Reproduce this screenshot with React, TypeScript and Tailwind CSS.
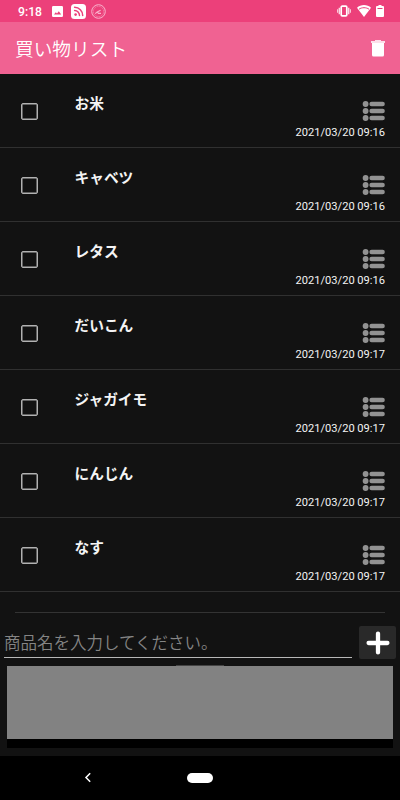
import React from "react";

const items = [
  { name: "お米", date: "2021/03/20 09:16" },
  { name: "キャベツ", date: "2021/03/20 09:16" },
  { name: "レタス", date: "2021/03/20 09:16" },
  { name: "だいこん", date: "2021/03/20 09:17" },
  { name: "ジャガイモ", date: "2021/03/20 09:17" },
  { name: "にんじん", date: "2021/03/20 09:17" },
  { name: "なす", date: "2021/03/20 09:17" },
];

function StatusBar() {
  return (
    <div className="flex h-[22px] items-center bg-[#ec407a] pl-[18px] pr-[16px] text-white">
      <span className="w-[34px] pt-[2px] font-[Roboto,sans-serif] text-[12.2px] font-medium leading-[20px]">9:18</span>
      <svg className="mt-px h-[11px] w-[11px]" viewBox="0 0 11 11">
        <rect width="11" height="11" rx="1.2" fill="#fff" />
        <path d="M2 8.6 3.8 6.3 5 7.6 6.8 5.2 9.2 8.6Z" fill="#ec407a" />
      </svg>
      <svg className="ml-[8px] h-[15px] w-[15px]" viewBox="0 0 15 15">
        <rect width="15" height="15" rx="3.5" fill="#fff" />
        <g fill="none" stroke="#ec407a" strokeWidth="1.5" strokeLinecap="round">
          <path d="M3.6 3.3A8.2 8.2 0 0 1 11.7 11.6M3.6 6.5A5 5 0 0 1 8.5 11.6" />
        </g>
        <circle cx="4.6" cy="10.6" r="1.3" fill="#ec407a" />
      </svg>
      <svg className="ml-[5px] h-[15px] w-[15px]" viewBox="0 0 15 15" fill="none" stroke="#f8b4cd">
        <circle cx="7.5" cy="7.5" r="6.8" strokeWidth="1" />
        <circle cx="7.5" cy="7.5" r="5.2" strokeWidth=".7" strokeDasharray="1 1" />
        <path d="M4.2 9.6 6.2 8 9.6 6.3M6.6 8.2 7.4 9.4H10" strokeWidth="1.1" />
      </svg>
      <div className="flex-1" />
      <svg className="h-[12px] w-[14px]" viewBox="0 0 14 12">
        <g fill="none" stroke="#fff">
          <rect x="4.2" y="1.2" width="5.6" height="9.6" rx="1" strokeWidth="1.7" />
          <path d="M2.3 2.8v6.4M11.7 2.8v6.4" strokeWidth="1.4" opacity=".8" />
          <path d="M.6 4.3v3.4M13.4 4.3v3.4" strokeWidth="1.1" opacity=".75" />
        </g>
      </svg>
      <svg className="ml-[6px] h-[12px] w-[14px]" viewBox="0 0 14 12">
        <path d="M7 0C4.3 0 1.9 1 0 2.7L7 12l7-9.3C12.1 1 9.7 0 7 0Z" fill="#fff" />
        <path d="M2 4.2C4.8 2.2 9.2 2.2 12 4.2" fill="none" stroke="#ec407a" strokeWidth="1" />
      </svg>
      <svg className="ml-[5px] h-[12px] w-[8px]" viewBox="0 0 8 12">
        <path d="M2.5 0h3v1H7a1 1 0 0 1 1 1v9a1 1 0 0 1-1 1H1a1 1 0 0 1-1-1V2a1 1 0 0 1 1-1h1.5Z" fill="#fff" />
        <path d="M1.5 3.5h5" stroke="#ec407a" strokeWidth="1" />
      </svg>
    </div>
  );
}

function Header() {
  return (
    <header className="flex h-[52px] items-center justify-between bg-[#f06292] pl-[15px] pr-[15px] text-white">
      <h1 className="font-['Noto_Sans_CJK_JP',sans-serif] text-[18.7px] font-[350] leading-[26px]">買い物リスト</h1>
      <svg className="h-[18px] w-[14px]" viewBox="0 0 14 18" fill="#fff">
        <path d="M4 1h6v1h4v2H0V2h4Z" opacity=".8" />
        <path d="M1 4h12v12a1.5 1.5 0 0 1-1.5 1.5h-9A1.5 1.5 0 0 1 1 16Z" />
      </svg>
    </header>
  );
}

function ListIcon() {
  return (
    <svg className="h-[20px] w-[23px]" viewBox="0 0 23 20" fill="#929292">
      {[3, 10, 17].map((y) => (
        <g key={y}>
          <circle cx="3.6" cy={y} r="2.9" />
          <rect x="7.4" y={y - 2.2} width="15.4" height="4.4" rx="2.2" />
        </g>
      ))}
    </svg>
  );
}

function Row({ name, date }: { name: string; date: string }) {
  return (
    <li className="flex h-[74px] border-b border-[#303030] pl-[21px] pr-[15px]">
      <span className="mt-[29px] h-[17px] w-[17px] shrink-0 rounded-[2px] border-[1.5px] border-[#b2b2b2] shadow-[inset_0_0_0_0.5px_#b2b2b2]" />
      <span className="ml-[36.5px] mt-[18px] font-['Noto_Sans_CJK_JP',sans-serif] text-[14.7px] font-bold leading-[22px] text-[#f4f4f4]">{name}</span>
      <div className="ml-auto flex flex-col items-end pt-[27px]">
        <ListIcon />
        <span className="mt-[5px] whitespace-nowrap font-[Roboto,sans-serif] text-[11.1px] leading-[14px] text-[#f4f4f4]">{date}</span>
      </div>
    </li>
  );
}

export default function App() {
  return (
    <div className="flex h-[800px] w-[400px] flex-col overflow-hidden bg-[#121212]">
      <StatusBar />
      <Header />
      <ul className="h-[518px]">
        {items.map((item) => (
          <Row key={item.name} {...item} />
        ))}
      </ul>
      <div className="mx-[15px] mt-[20px] h-px bg-[#333333]" />
      <div className="flex h-[53px] items-start pl-[4px] pr-[4px] pt-[13px]">
        <div className="mt-[3px] h-[29px] w-[348px] border-b border-[#b8b8b8]">
          <input
            aria-label="商品名"
            placeholder="商品名を入力してください。"
            className="block h-[26px] w-full bg-transparent font-['Noto_Sans_CJK_JP',sans-serif] text-[16.5px] font-[350] leading-[26px] outline-none placeholder:text-[#858585] placeholder:opacity-100"
          />
        </div>
        <button aria-label="追加" className="ml-[7px] flex h-[33px] w-[37px] items-center justify-center rounded-[2px] bg-[#292929]">
          <svg className="h-[24px] w-[24px]" viewBox="0 0 24 24" stroke="#fff" strokeWidth="4.3" strokeLinecap="round">
            <path d="M12 2.6v18.8M2.6 12h18.8" />
          </svg>
        </button>
      </div>
      <div className="mx-[7px] h-[82px] bg-black">
        <div className="mx-auto -mt-px h-px w-[48px] bg-[#444444]" />
        <div className="h-[73px] bg-[#828282]" />
      </div>
      <nav className="mt-auto flex h-[44px] items-center bg-black pb-px">
        <svg className="ml-[84px] h-[11px] w-[8px]" viewBox="0 0 8 11" fill="none" stroke="#fff" strokeWidth="1.5">
          <path d="M6.2 1.3 2 5.5l4.2 4.2" />
        </svg>
        <span className="ml-[95px] h-[10px] w-[26px] rounded-full bg-white" />
      </nav>
    </div>
  );
}
